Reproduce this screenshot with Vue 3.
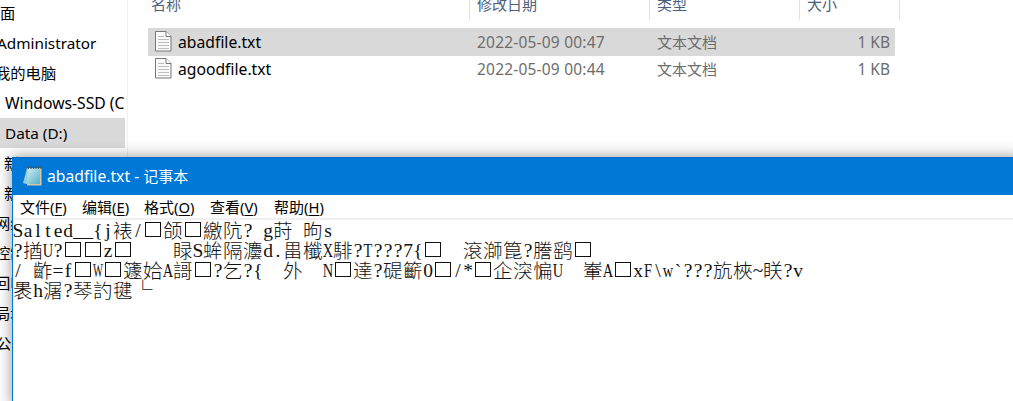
<script setup>
const places = [
  { label: '面', shift: 0 },
  { label: 'Administrator', shift: -3 },
  { label: '我的电脑', shift: -5 },
  { label: 'Windows-SSD (C', shift: 5 },
  { label: 'Data (D:)', shift: 5, active: true },
  { label: '新', shift: 4 },
  { label: '新', shift: 4 },
  { label: '网络', shift: -5 },
  { label: '控制', shift: -5 },
  { label: '回收', shift: -5 },
  { label: '局域', shift: -5 },
  { label: '公司', shift: -4 },
]
const files = [
  { name: 'abadfile.txt', date: '2022-05-09 00:47', active: true },
  { name: 'agoodfile.txt', date: '2022-05-09 00:44' },
]
const menus = [
  ['文件', 'F', 62], ['编辑', 'E', 62], ['格式', 'O', 66], ['查看', 'V', 64], ['帮助', 'H', 60],
]
const kindOf = ch => {
  if (ch === '□') return 'box'
  if (ch.charCodeAt(0) >= 128) return 'full'
  if (ch === 'W') return 'half widest'
  if ('UNAXTFw'.includes(ch)) return 'half wide'
  return 'half'
}
const lines = [
  'Salted__{j裱/□颌□繳阬? g莳 昫s',
  '?揂U?□□z□    睩S蛑隔灋d.畕櫼X騑?T???7{□  滾溮箟?謄鹞□',
  '/ 齚=f□W□籧姶A謌□?乞?{  外  N□達?碮籪0□/*□企湥惼U  輋A□xF\\w`???斻梜~眹?v',
  '褁h潳?琴訋毽',
].map(line => [...line].map(ch => ({ ch, kind: kindOf(ch) })))
lines[3].push({ ch: '└', kind: 'full corner' })
</script>

<template>
  <div class="screen">
    <nav class="side">
      <div v-for="(p, i) in places" :key="i" class="place" :class="{ active: p.active }">
        <span :style="{ marginLeft: p.shift + 'px' }">{{ p.label }}</span>
      </div>
    </nav>

    <main class="list">
      <div class="head">
        <div class="c-name">名称</div>
        <div class="c-date">修改日期</div>
        <div class="c-type">类型</div>
        <div class="c-size">大小</div>
      </div>
      <div v-for="f in files" :key="f.name" class="row" :class="{ active: f.active }">
        <svg class="doc" width="17" height="21" viewBox="0 0 17 21">
          <path d="M.5.5H11l5 5V20H.5z" fill="#fafafa" stroke="#777" />
          <path d="M11 .5v5h5" fill="#fff" stroke="#777" />
          <path d="M3 5.5h6M3 8.5h11M3 11.5h11M3 14.5h11M3 17.5h11" stroke="#bdbdbd" />
        </svg>
        <span class="name">{{ f.name }}</span>
        <span class="date">{{ f.date }}</span>
        <span class="type">文本文档</span>
        <span class="size">1 KB</span>
      </div>
    </main>

    <section class="notepad">
      <header class="title">
        <svg width="20" height="22" viewBox="0 0 20 22">
          <defs>
            <linearGradient id="page" x1="0" y1="0" x2="1" y2="1">
              <stop offset="0" stop-color="#d4f0f5" />
              <stop offset="1" stop-color="#55afc8" />
            </linearGradient>
          </defs>
          <path d="M4 3L0 18l3 1h14V3z" fill="#8fc9dc" />
          <path d="M5 3H17v16H3z" fill="url(#page)" />
          <path d="M17 3h1.500v17.500H4v-1.500h13z" fill="#d3c8a6" />
          <path d="M5.500 1v3M8 1v3M10.500 1v3M13 1v3M15.500 1v3M18 1v3" stroke="#46525a" stroke-width="1.100" />
        </svg>
        <span><b>abadfile.txt - </b>记事本</span>
      </header>
      <div class="menu">
        <span v-for="m in menus" :key="m[1]" :style="{ width: m[2] + 'px' }">{{ m[0] }}<i>(<u>{{ m[1] }}</u>)</i></span>
      </div>
      <div class="text">
        <div v-for="(line, i) in lines" :key="i" class="line">
          <span v-for="(c, j) in line" :key="j" :class="c.kind"><template v-if="c.kind !== 'box'">{{ c.ch }}</template></span>
        </div>
      </div>
    </section>
  </div>
</template>

<style>
body { margin: 0; background: #fff; }
</style>

<style scoped>
.screen {
  position: relative;
  display: flex;
  width: 1013px;
  height: 401px;
  overflow: hidden;
  background: #fff;
  color: #000;
  font: 15px/30px "Noto Sans", "Noto Sans CJK SC", sans-serif;
  white-space: nowrap;
}
.side {
  width: 127px;
  flex: none;
  border-right: 1px solid #f1f1f1;
  margin-top: -2px;
}
.place {
  display: flex;
  width: 125px;
  height: 30px;
  overflow: hidden;
  font-size: 15.3px;
}
.place:nth-child(4) { font-size: 15.7px; }
.place.active { background: #d9d9d9; }
.list { margin-left: 20px; width: 752px; }
.head {
  display: flex;
  height: 20px;
  margin-bottom: 8px;
  color: #4c607a;
  line-height: 9px;
}
.head div {
  box-sizing: border-box;
  height: 20px;
  border-right: 1px solid #e2e2e2;
}
.c-name { width: 322px; padding-left: 3px; }
.c-date { width: 180px; padding-left: 7px; }
.c-type { width: 150px; padding-left: 7px; }
.c-size { width: 100px; padding-left: 7px; }
.row {
  display: flex;
  align-items: center;
  width: 747px;
  height: 26px;
  line-height: 26px;
  color: #6d6d6d;
}
.row.active { background: #d9d9d9; height: 28px; }
.doc { margin: 0 6px 1px 7px; flex: none; }
.name { width: 299px; color: #000; font-size: 15.7px; }
.date { width: 180px; font-size: 15.5px; letter-spacing: 0.2px; }
.type { width: 150px; }
.size { width: 83px; text-align: right; font-size: 15.5px; }
.notepad {
  position: absolute;
  left: 12px;
  top: 157px;
  width: 1010px;
  height: 250px;
  border-left: 1px solid #0078d7;
  background: #fff;
  box-shadow: 0 0 14px rgba(0, 0, 0, .42);
}
.title {
  display: flex;
  align-items: center;
  gap: 4px;
  height: 38px;
  margin-left: -1px;
  padding: 0 0 2px 11px;
  background: #0078d7;
  border-top: 1px solid #006bbf;
  box-sizing: border-box;
  color: #fff;
}
.title b { font-weight: 400; font-size: 15.7px; }
.menu {
  display: flex;
  height: 23px;
  padding-left: 7px;
  border-bottom: 2px solid #f0f0f0;
  line-height: 25px;
}
.menu i { font-style: normal; font-size: 14.8px; }
.menu u { text-underline-offset: 2px; }
.text { color: #111; }
.line { display: flex; height: 20px; line-height: 20px; }
.half {
  display: flex;
  justify-content: center;
  width: 10px;
  height: 20px;
  flex: none;
  font-family: "Liberation Serif", serif;
  font-size: 19.5px;
  line-height: 21px;
  white-space: pre;
}
.wide { transform: scaleX(.74); }
.widest { transform: scaleX(.54); }
.full {
  width: 20px;
  height: 20px;
  flex: none;
  font-family: "Noto Sans CJK SC", sans-serif;
  font-size: 19.5px;
  line-height: 19px;
  font-weight: 300;
}
.corner { margin-top: -1px; }
.box {
  box-sizing: border-box;
  width: 16px;
  height: 15px;
  margin: 2px 2px 3px 2px;
  flex: none;
  border: 1px solid #111;
}
</style>
